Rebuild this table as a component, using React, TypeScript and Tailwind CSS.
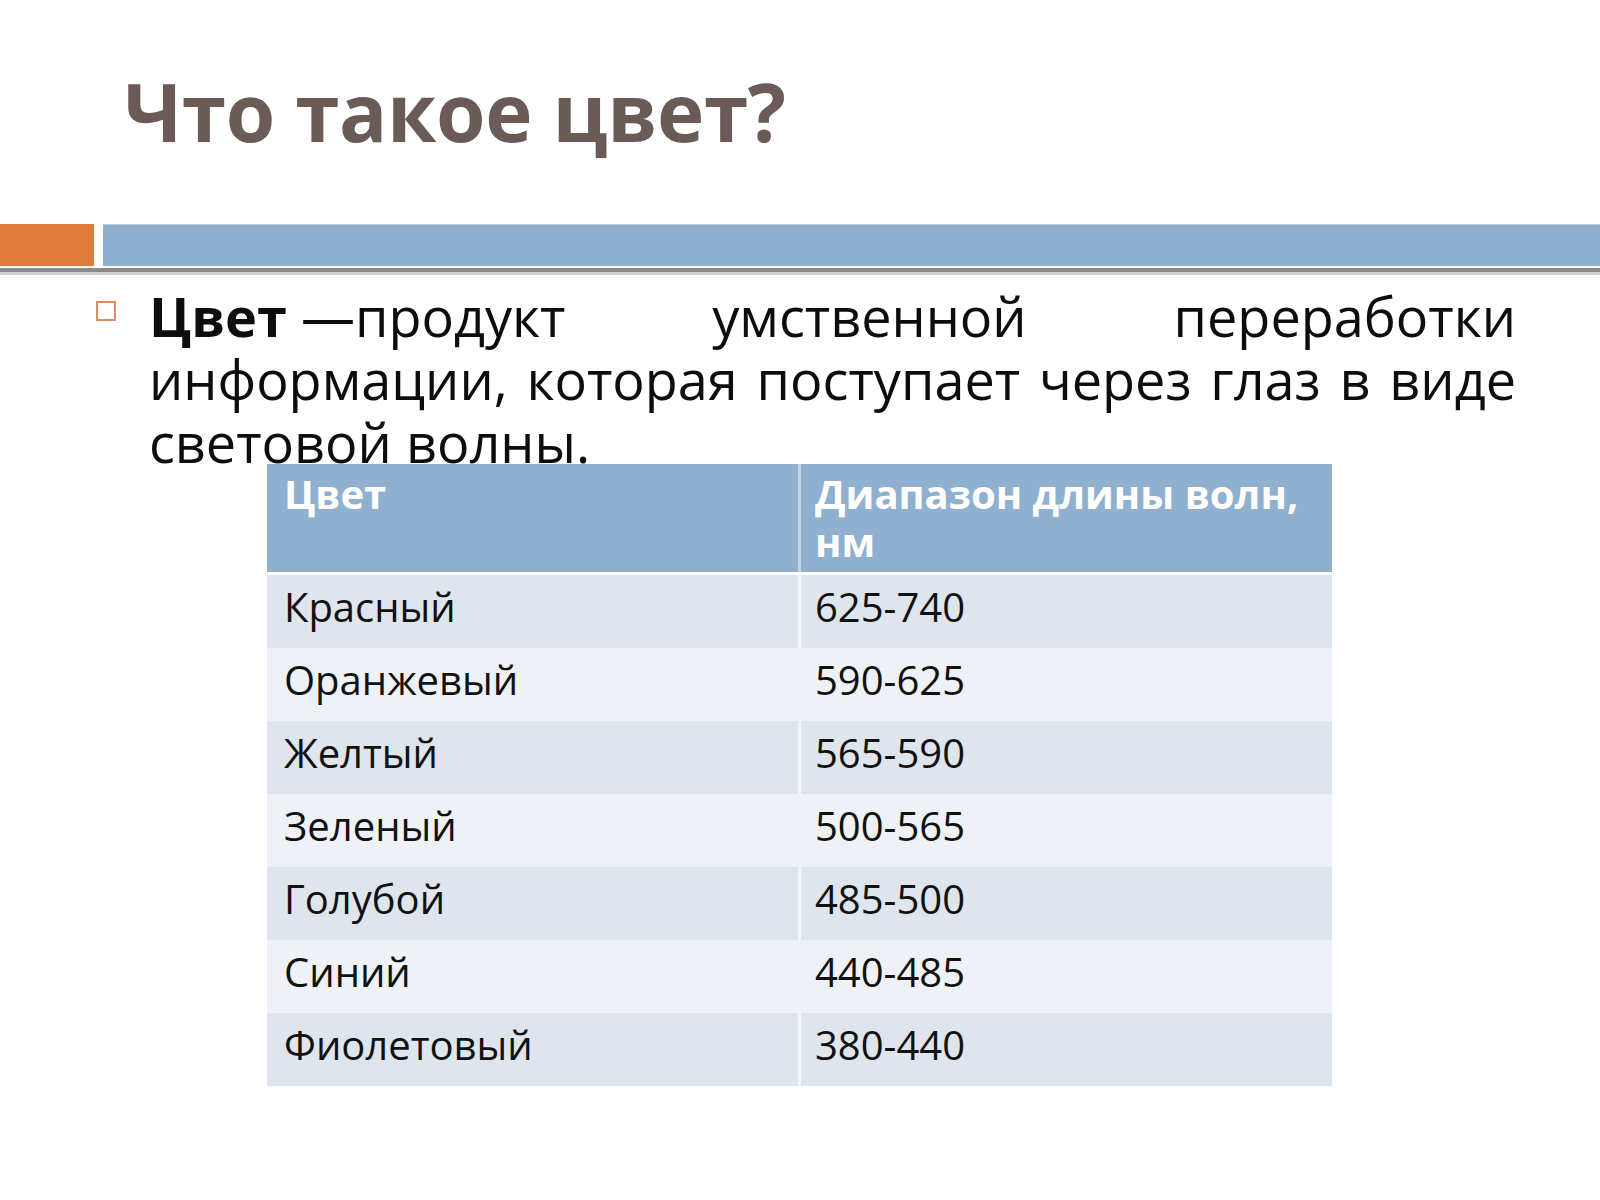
const rows = [
  { name: "Красный", range: "625-740" },
  { name: "Оранжевый", range: "590-625" },
  { name: "Желтый", range: "565-590" },
  { name: "Зеленый", range: "500-565" },
  { name: "Голубой", range: "485-500" },
  { name: "Синий", range: "440-485" },
  { name: "Фиолетовый", range: "380-440" },
];

export default function App() {
  return (
    <div className="w-[1600px] h-[1200px] bg-white overflow-hidden font-['Open_Sans','Noto_Sans',sans-serif]">
      <h1 className="pl-[124px] pt-[71px] text-[80px] leading-[80px] font-bold tracking-[-0.4px] text-[#6a5b56]">Что такое цвет?</h1>

      {/* title rule */}
      <div className="mt-[73px]">
        <div className="flex gap-[9px] h-[42px]">
          <div className="w-[94px] bg-[#df7b3b]" />
          <div className="flex-1 bg-[#8fb1cf] border-t border-[#b8cde0]" />
        </div>
        <div className="h-[2px]" />
        <div className="h-[4px] bg-[#8a8a8a]" />
        <div className="h-[3px] bg-[#d2d2d2]" />
      </div>

      <div className="flex items-start mt-[10px]">
        <div className="ml-[96px] mt-[16px] w-[20px] h-[20px] border-2 border-[#dc8d62] shrink-0" />
        <p className="ml-[33px] w-[1367px] text-[54px] leading-[63px] text-justify text-[#0d0d0d]">
          <span className="inline-block"><strong className="font-bold">Цвет</strong> —продукт</span> умственной переработки информации, которая поступает через глаз в виде световой волны.
        </p>
      </div>

      <div className="relative z-10 ml-[267px] -mt-[10px] w-[1065px] text-[40px] leading-[48px]">
        <div className="flex h-[108px] bg-[#8fb1cf] text-white font-bold">
          <div className="w-[531px] px-[17px] pt-[6px]">Цвет</div>
          <div className="w-[534px] border-l-[3px] border-[#c3d5e5] px-[14px] pt-[6px]">Диапазон длины волн, нм</div>
        </div>
        <div className="mt-[3px]">
          {rows.map((r, i) => (
            <div key={r.name} className={i % 2 === 0 ? "flex h-[73px] bg-[#dfe5ed] text-[#111]" : "flex h-[73px] bg-[#eef2f6] text-[#111]"}>
              <div className="w-[531px] px-[17px] pt-[8px]">{r.name}</div>
              <div className={i % 2 === 0 ? "w-[534px] border-l-[3px] border-[#f4f6f9] px-[14px] pt-[8px]" : "w-[534px] border-l-[3px] border-[#eef2f6] px-[14px] pt-[8px]"}>{r.range}</div>
            </div>
          ))}
        </div>
      </div>
    </div>
  );
}
